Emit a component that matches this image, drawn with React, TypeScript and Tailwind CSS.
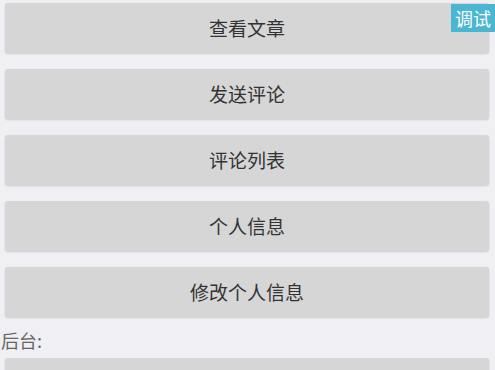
const items = ['查看文章', '发送评论', '评论列表', '个人信息', '修改个人信息'];

export default function App() {
  return (
    <div className="relative h-[370px] overflow-hidden bg-[#efeff4] font-['Noto_Sans_CJK_SC',sans-serif]">
      <div className="flex flex-col gap-[16px] px-[5px] pr-[6px] pt-[3px]">
        {items.map((t) => (
          <button
            key={t}
            className="h-[50px] w-full rounded-[3px] bg-[#d6d6d6] text-[19px] text-[#333] shadow-[0_1px_2px_rgba(0,0,0,0.15)]"
          >
            {t}
          </button>
        ))}
      </div>
      <div className="mt-[6px] h-[35px] pl-[1px] text-[18px] leading-[34px] text-[#666]">后台:</div>
      <div className="px-[5px] pr-[6px]">
        <button className="h-[50px] w-full rounded-[3px] bg-[#d6d6d6] shadow-[0_1px_2px_rgba(0,0,0,0.15)]" />
      </div>
      <div className="absolute right-0 top-[4px] flex h-[28px] w-[44px] items-center justify-center bg-[#4ab6d2] text-[18px] text-white">
        调试
      </div>
    </div>
  );
}
